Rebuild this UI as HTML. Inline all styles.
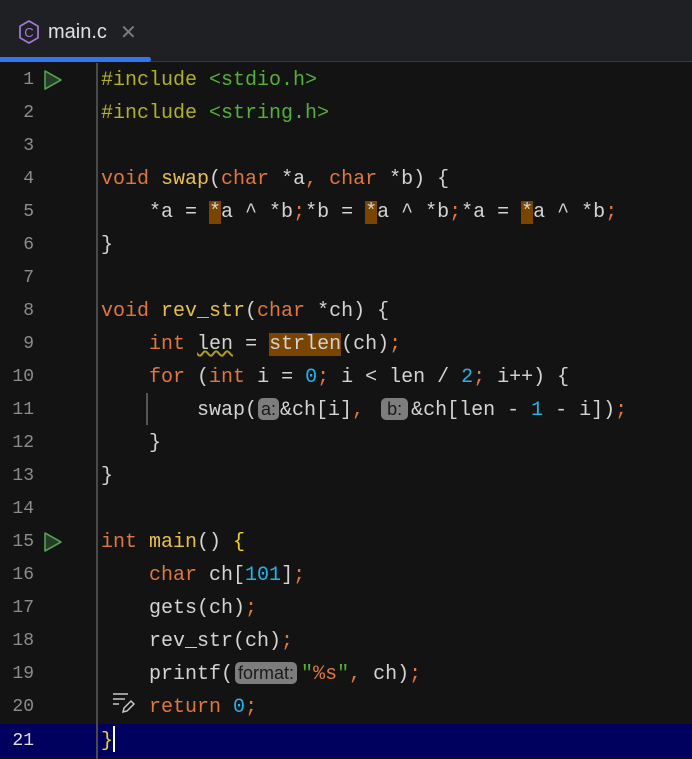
<!DOCTYPE html>
<html><head><meta charset="utf-8"><style>
*{margin:0;padding:0;box-sizing:border-box}
body{width:692px;height:759px;background:#131313;overflow:hidden;position:relative;font-family:"Liberation Mono",monospace}
.top{position:absolute;left:0;top:0;width:692px;height:62px;background:#1f2024;border-bottom:1px solid #3a3b40}
.tabbar{position:absolute;left:0;top:57px;width:151px;height:5px;background:#3574f0;border-radius:0 3px 3px 0}
.tab{position:absolute;left:48px;top:21px;font-family:"Liberation Sans",sans-serif;font-size:20px;color:#dfe1e5}
.x{position:absolute;left:120px;top:20px;font-family:"Liberation Sans",sans-serif;font-size:20px;color:#7a7c80}
.gut{position:absolute;left:96px;top:63px;width:2px;height:696px;background:#4a4a4a}
.cur{position:absolute;left:0;top:724px;width:692px;height:34px;background:#00005e}
.ln{position:absolute;left:0;width:34px;text-align:right;font-size:18px;color:#8c8c8c;height:33px;line-height:35px;font-family:"Liberation Mono",monospace}
.c{position:absolute;left:101px;height:33px;line-height:35px;font-size:20px;color:#d4d4d4;white-space:pre}
.k{color:#e0773f}.f{color:#e8c04e}.p{color:#b0b029}.s{color:#55b038}.n{color:#27b1e8}.o{color:#e0773f}
.h{background:#7a4500}
.hint{display:inline-block;background:#7d7d7d;color:#1a1a1a;font-family:"Liberation Sans",sans-serif;font-size:18px;line-height:22px;border-radius:5px;padding:0 3px;vertical-align:0px;margin:0 3px}
.y{color:#f2d42c}
</style></head><body>
<div class="top"></div>
<svg style="position:absolute;left:17px;top:19px" width="24" height="26" viewBox="0 0 24 26"><path d="M12 2 L21 7.2 V18.8 L12 24 L3 18.8 V7.2 Z" fill="none" stroke="#a57bd8" stroke-width="1.7"/><text x="12" y="18" text-anchor="middle" font-family="Liberation Sans" font-size="13" fill="#a57bd8">C</text></svg>
<div class="tab">main.c</div>
<div class="x">✕</div>
<div class="tabbar"></div>
<div class="cur"></div>
<div class="gut"></div>
<div style="position:absolute;left:146px;top:393px;width:2px;height:32px;background:#555"></div>
<svg style="position:absolute;left:43px;top:69px" width="20" height="22"><path d="M2 2 L18 11 L2 20 Z" fill="#283a28" stroke="#4fa04f" stroke-width="1.6" stroke-linejoin="round"/></svg>
<svg style="position:absolute;left:43px;top:531px" width="20" height="22"><path d="M2 2 L18 11 L2 20 Z" fill="#283a28" stroke="#4fa04f" stroke-width="1.6" stroke-linejoin="round"/></svg>
<svg style="position:absolute;left:111px;top:691px" width="24" height="24" viewBox="0 0 24 24" fill="none" stroke="#c8c8c8" stroke-width="1.5"><path d="M2 3H17M2 8H14M2 13H8"/><path d="M12 21L13 17L20 10L23 13L16 20Z"/></svg>

<div class="ln" style="top:63px">1</div><div class="c" style="top:63px"><span class="p">#include </span><span class="s">&lt;stdio.h&gt;</span></div>
<div class="ln" style="top:96px">2</div><div class="c" style="top:96px"><span class="p">#include </span><span class="s">&lt;string.h&gt;</span></div>
<div class="ln" style="top:129px">3</div>
<div class="ln" style="top:162px">4</div><div class="c" style="top:162px"><span class="k">void </span><span class="f">swap</span>(<span class="k">char</span> *a<span class="o">,</span> <span class="k">char</span> *b) {</div>
<div class="ln" style="top:195px">5</div><div class="c" style="top:195px">    *a = <span class="h">*</span>a ^ *b<span class="o">;</span>*b = <span class="h">*</span>a ^ *b<span class="o">;</span>*a = <span class="h">*</span>a ^ *b<span class="o">;</span></div>
<div class="ln" style="top:228px">6</div><div class="c" style="top:228px">}</div>
<div class="ln" style="top:261px">7</div>
<div class="ln" style="top:294px">8</div><div class="c" style="top:294px"><span class="k">void </span><span class="f">rev_str</span>(<span class="k">char</span> *ch) {</div>
<div class="ln" style="top:327px">9</div><div class="c" style="top:327px">    <span class="k">int</span> <span style="text-decoration:underline wavy #b09a20">len</span> = <span class="h">strlen</span>(ch)<span class="o">;</span></div>
<div class="ln" style="top:360px">10</div><div class="c" style="top:360px">    <span class="k">for</span> (<span class="k">int</span> i = <span class="n">0</span><span class="o">;</span> i &lt; len / <span class="n">2</span><span class="o">;</span> i++) {</div>
<div class="ln" style="top:393px">11</div><div class="c" style="top:393px">        swap(<span class="hint" style="margin:0 1px 0 1px">a:</span>&amp;ch[i]<span class="o">,</span> <span class="hint" style="padding:0 6px;margin:0 3px 0 5px">b:</span>&amp;ch[len - <span class="n">1</span> - i])<span class="o">;</span></div>
<div class="ln" style="top:426px">12</div><div class="c" style="top:426px">    }</div>
<div class="ln" style="top:459px">13</div><div class="c" style="top:459px">}</div>
<div class="ln" style="top:492px">14</div>
<div class="ln" style="top:525px">15</div><div class="c" style="top:525px"><span class="k">int </span><span class="f">main</span>() <span class="y">{</span></div>
<div class="ln" style="top:558px">16</div><div class="c" style="top:558px">    <span class="k">char</span> ch[<span class="n">101</span>]<span class="o">;</span></div>
<div class="ln" style="top:591px">17</div><div class="c" style="top:591px">    gets(ch)<span class="o">;</span></div>
<div class="ln" style="top:624px">18</div><div class="c" style="top:624px">    rev_str(ch)<span class="o">;</span></div>
<div class="ln" style="top:657px">19</div><div class="c" style="top:657px">    printf(<span class="hint" style="margin:0 4px 0 2px">format:</span><span class="s">"</span><span class="k">%s</span><span class="s">"</span><span class="o">,</span> ch)<span class="o">;</span></div>
<div class="ln" style="top:690px">20</div><div class="c" style="top:690px">    <span class="k">return</span> <span class="n">0</span><span class="o">;</span></div>
<div class="ln" style="top:724px;color:#e0e0e0">21</div><div class="c" style="top:724px"><span class="y">}</span><span style="display:inline-block;width:2px;height:26px;background:#fff;vertical-align:-6px"></span></div>
</body></html>
